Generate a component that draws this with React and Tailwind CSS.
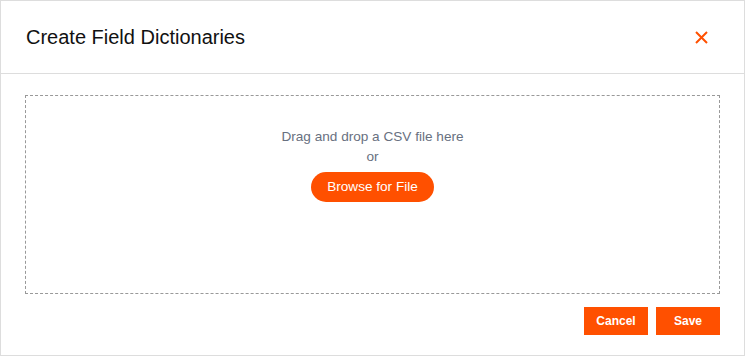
export default function App() {
  return (
    <div className="w-[745px] h-[356px] bg-white border border-[#dddddd] font-['Liberation_Sans',Arial,sans-serif] flex flex-col">
      <div className="h-[73px] shrink-0 border-b border-[#dddddd] flex items-center justify-between pl-[25px] pr-[36px]">
        <h2 className="text-[20px] text-[#111] leading-none">Create Field Dictionaries</h2>
        <button className="text-[#ff5000]">
          <svg width="13" height="13" viewBox="0 0 13 13" fill="none" stroke="currentColor" strokeWidth="2">
            <path d="M1 1L12 12M12 1L1 12" />
          </svg>
        </button>
      </div>
      <div className="flex-1 flex flex-col px-[24px] pt-[21px] pb-[19px]">
        <div className="h-[199px] border border-dashed border-[#999] flex flex-col items-center pt-[33px]">
          <p className="text-[13.6px] text-[#687080] leading-[16px]">Drag and drop a CSV file here</p>
          <p className="text-[13.6px] text-[#687080] leading-[16px] mt-[4px]">or</p>
          <button className="mt-[7px] h-[30px] w-[123px] rounded-full bg-[#ff5000] text-white text-[13.6px]">
            Browse for File
          </button>
        </div>
        <div className="flex justify-end gap-[8px] mt-[13px]">
          <button className="w-[64px] h-[28px] bg-[#ff5000] text-white text-[12px] font-bold">Cancel</button>
          <button className="w-[64px] h-[28px] bg-[#ff5000] text-white text-[12px] font-bold">Save</button>
        </div>
      </div>
    </div>
  );
}
